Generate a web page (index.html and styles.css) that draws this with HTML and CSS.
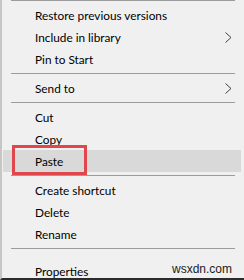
FILE: index.html
```html
<!DOCTYPE html>
<html lang="en">
<head>
    <meta charset="UTF-8">
    <meta name="viewport" content="width=device-width, initial-scale=1.0">
    <title>Context menu</title>
    <link rel="stylesheet" href="styles.css">
</head>
<body>

    <div class="menu">
        <div class="sep"></div>
        <div class="item">Restore previous versions</div>
        <div class="item">Include in library
            <svg class="arrow" width="7" height="11" viewBox="0 0 7 11"><polyline points="0.5,0.5 6,5.5 0.5,10.5" /></svg>
        </div>
        <div class="item">Pin to Start</div>
        <div class="sep"></div>
        <div class="item">Send to
            <svg class="arrow" width="7" height="11" viewBox="0 0 7 11"><polyline points="0.5,0.5 6,5.5 0.5,10.5" /></svg>
        </div>
        <div class="sep"></div>
        <div class="item">Cut</div>
        <div class="item">Copy</div>
        <div class="item active">Paste
            <!-- 赤い枠 -->
            <span class="mark"></span>
        </div>
        <div class="sep"></div>
        <div class="item">Create shortcut</div>
        <div class="item">Delete</div>
        <div class="item">Rename</div>
        <div class="sep sep-wide"></div>
        <div class="item">Properties</div>

        <span class="watermark">wsxdn.com</span>
    </div>

</body>
</html>
```

FILE: styles.css
```css
body {
    margin: 0;
    width: 244px;
    height: 280px;
    overflow: hidden;
    background-color: #f0f0f0;
    font-family: Lato, "Noto Sans", sans-serif;
    font-size: 11.8px;
    color: #000;
}
.menu {
    position: relative;
    box-sizing: border-box;
    height: 280px;
    border-left: 2px solid #c6c6c6;
    border-bottom: 2px solid #2b2b2b;
    overflow: hidden;
}
.item {
    position: relative;
    display: flex;
    justify-content: space-between;
    align-items: center;
    height: 22px;
    padding: 0 12px 0 33px;
}
.item.active {
    background-color: #d9d9d9;
    margin: 0 3px 0 1px;
    padding-left: 32px;
    padding-right: 8px;
}
.arrow polyline {
    fill: none;
    stroke: #404040;
    stroke-width: 1;
}
.sep {
    height: 1px;
    margin: 3px 9px 3px 9px;
    background-color: #9c9c9c;
}
.sep:first-child {
    margin-top: 0;
}
.sep-wide {
    margin-bottom: 11px;
}
/* 赤枠 */
.mark {
    position: absolute;
    left: 9px;
    top: -5px;
    width: 69px;
    height: 24px;
    border: 3px solid #e0474c;
}
.watermark {
    position: absolute;
    right: 12px;
    bottom: 2px;
    font-family: "Liberation Sans", sans-serif;
    font-size: 12px;
    color: #222;
}
```
